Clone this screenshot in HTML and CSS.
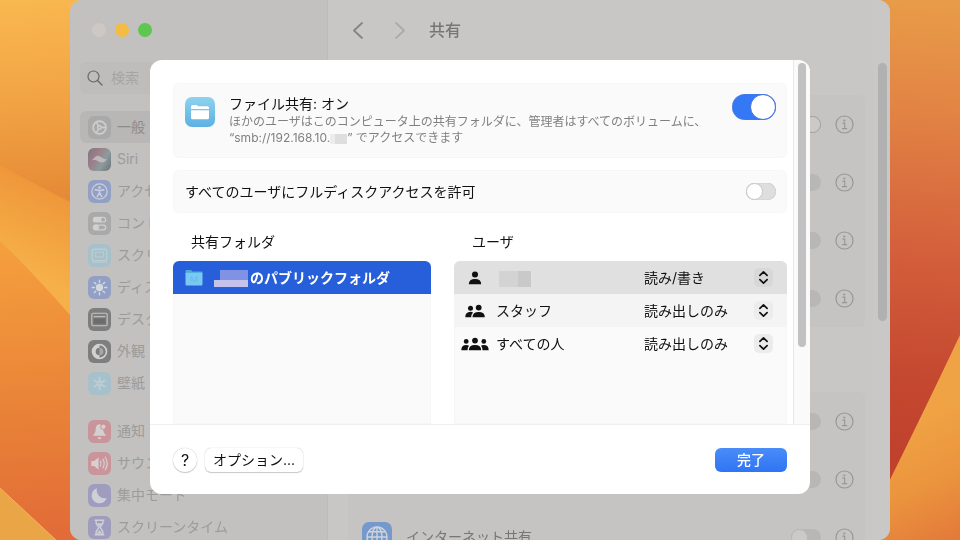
FILE: index.html
```html
<!DOCTYPE html>
<html lang="ja">
	<head>
		<meta charset="utf-8">
		<meta name="viewport" content="width=device-width, initial-scale=1.0">
		<title>共有</title>
		<link rel="stylesheet" href="styles.css">
	</head>

	<body>
		<svg class="wallpaper" viewBox="0 0 960 540" preserveAspectRatio="none" aria-hidden="true">
			<defs>
				<linearGradient id="leftTop" gradientUnits="userSpaceOnUse" x1="0" y1="0" x2="20" y2="200"><stop offset="0" stop-color="#f9b850"/><stop offset="0.5" stop-color="#f2a444"/><stop offset="1" stop-color="#e58a37"/></linearGradient>
				<linearGradient id="leftBand" gradientUnits="userSpaceOnUse" x1="60" y1="190" x2="20" y2="270"><stop offset="0" stop-color="#ee963a"/><stop offset="0.6" stop-color="#f3a642"/><stop offset="1" stop-color="#f6b04a"/></linearGradient>
				<linearGradient id="leftLow" gradientUnits="userSpaceOnUse" x1="0" y1="240" x2="20" y2="540"><stop offset="0" stop-color="#f5a03e"/><stop offset="0.5" stop-color="#ea8638"/><stop offset="1" stop-color="#e26b37"/></linearGradient>
				<linearGradient id="rightTop" gradientUnits="userSpaceOnUse" x1="930" y1="0" x2="900" y2="450"><stop offset="0" stop-color="#e89c48"/><stop offset="0.25" stop-color="#e28344"/><stop offset="0.55" stop-color="#d4603c"/><stop offset="0.85" stop-color="#c4472f"/><stop offset="1" stop-color="#c0422d"/></linearGradient>
				<linearGradient id="rightLow" gradientUnits="userSpaceOnUse" x1="910" y1="420" x2="965" y2="540"><stop offset="0" stop-color="#f0a344"/><stop offset="0.5" stop-color="#eb943e"/><stop offset="1" stop-color="#e27839"/></linearGradient>
			</defs>
			<rect width="480" height="230" fill="url(#leftTop)"/>
			<path d="M0 165Q34 184 90 212V345H0z" fill="url(#leftBand)"/>
			<path d="M0 241Q36 275 90 338V540H0z" fill="url(#leftLow)"/>
			<path d="M0 488L56 540H0z" fill="#eaa547"/>
			<path d="M0 488L56 540" stroke="#f3b45a" stroke-width="1"/>
			<rect x="480" width="480" height="540" fill="url(#rightTop)"/>
			<path d="M960 335Q920 420 860 540H960z" fill="url(#rightLow)"/>
		</svg>

		<!-- icon set -->
		<svg class="defs" aria-hidden="true">
			<symbol id="info" viewBox="0 0 20 20"><circle cx="10" cy="10" r="9" fill="none" stroke="currentColor" stroke-width="1.2"/><circle cx="9.8" cy="5.8" r="1.1" fill="currentColor"/><path d="M7.8 8.6H10.2V14.2M7.4 14.3H12.8" fill="none" stroke="currentColor" stroke-width="1.2"/></symbol>
			<symbol id="updown" viewBox="0 0 20 20"><path d="M6.2 7.8L10 4.2L13.8 7.8M6.2 12.2L10 15.8L13.8 12.2" fill="none" stroke="#111" stroke-width="1.8" stroke-linecap="round" stroke-linejoin="round"/></symbol>
			<symbol id="globe" viewBox="0 0 24 24"><g fill="none" stroke="#d0d3d8" stroke-width="1.1"><circle cx="12" cy="12" r="8"/><ellipse cx="12" cy="12" rx="4" ry="8"/><path d="M12 4V20M4 12H20M5.5 7.8H18.5M5.5 16.2H18.5"/></g></symbol>
		</svg>

		<div class="window">
			<aside class="sidebar">
				<div class="lights">
					<button class="light" aria-label="閉じる"></button>
					<button class="light yellow" aria-label="しまう"></button>
					<button class="light green" aria-label="拡大"></button>
				</div>
				<label class="search">
					<svg viewBox="0 0 16 16" width="16" height="16"><circle cx="6.5" cy="6.5" r="5.5" fill="none" stroke="#666" stroke-width="1.2"/><path d="M10.5 10.5L15 15" stroke="#666" stroke-width="1.3" stroke-linecap="round"/></svg>
					<input type="search" placeholder="検索" aria-label="検索">
				</label>
				<nav>
					<a href="#" class="item current"><span class="tile gray"><svg viewBox="0 0 24 24"><g fill="none" stroke="#cfcfcf" stroke-width="1.5"><circle cx="12" cy="12" r="6.5"/><circle cx="12" cy="12" r="1.8"/><path d="M13.8 12H18.5M11 10.5L8.7 6.5M11 13.5L8.7 17.5"/></g><circle cx="12" cy="12" r="7.5" fill="none" stroke="#cfcfcf" stroke-width="1" stroke-dasharray="1 1.2"/></svg></span>一般</a>
					<a href="#" class="item"><span class="tile siri"><svg viewBox="0 0 24 24"><path d="M4 13Q9 6 13 9T20 12Q15 17 11 14T4 13z" fill="#d3c9cd" opacity="0.7"/></svg></span>Siri</a>
					<a href="#" class="item"><span class="tile blue"><svg viewBox="0 0 24 24"><circle cx="12" cy="12" r="8" fill="none" stroke="#ccd0dc" stroke-width="1.3"/><circle cx="12" cy="7.8" r="1.4" fill="#ccd0dc"/><path d="M7.5 10.2L12 11L16.5 10.2M12 11V13.2L9.7 17.3M12 13.2L14.3 17.3" fill="none" stroke="#ccd0dc" stroke-width="1.5" stroke-linecap="round"/></svg></span>アクセシビリティ</a>
					<a href="#" class="item"><span class="tile gray"><svg viewBox="0 0 24 24"><rect x="5" y="5" width="14" height="6" rx="3" fill="#d0d0d0"/><circle cx="15.8" cy="8" r="2" fill="#a9a8a8"/><rect x="5.6" y="13.6" width="12.8" height="5" rx="2.5" fill="none" stroke="#d0d0d0" stroke-width="1.3"/><circle cx="8.5" cy="16" r="3" fill="#d0d0d0"/></svg></span>コントロールセンター</a>
					<a href="#" class="item"><span class="tile cyan"><svg viewBox="0 0 24 24"><rect x="4.5" y="5.5" width="15" height="12" rx="1.5" fill="none" stroke="#bccdd2" stroke-width="1.5"/><rect x="8" y="8.5" width="8" height="5" fill="none" stroke="#bccdd2"/><path d="M4 19H20" stroke="#bccdd2"/></svg></span>スクリーンセーバ</a>
					<a href="#" class="item"><span class="tile blue"><svg viewBox="0 0 24 24"><circle cx="12" cy="12" r="3.8" fill="#d6d8df"/><path d="M12 4.5V6.5M12 17.5V19.5M4.5 12H6.5M17.5 12H19.5M6.7 6.7L8.1 8.1M15.9 15.9L17.3 17.3M6.7 17.3L8.1 15.9M15.9 8.1L17.3 6.7" stroke="#d6d8df" stroke-width="1.5" stroke-linecap="round"/></svg></span>ディスプレイ</a>
					<a href="#" class="item"><span class="tile dark"><svg viewBox="0 0 24 24"><rect x="4" y="5.5" width="16" height="13" rx="1.5" fill="none" stroke="#c5c5c5" stroke-width="1.2"/><path d="M6 9H18" stroke="#c5c5c5" stroke-width="1.2"/><rect x="6" y="11" width="12" height="5.5" fill="#6c6c6c"/></svg></span>デスクトップと Dock</a>
					<a href="#" class="item"><span class="tile dark"><svg viewBox="0 0 24 24"><circle cx="12" cy="12" r="7.3" fill="none" stroke="#d2d2d2" stroke-width="1.7"/><path d="M12 5A7 7 0 0 0 12 19V16A4 4 0 0 1 12 8z" fill="#d2d2d2"/><path d="M12 8A4 4 0 0 1 12 16z" fill="#d2d2d2" opacity="0.5"/></svg></span>外観</a>
					<a href="#" class="item"><span class="tile cyan"><svg viewBox="0 0 24 24"><g fill="none" stroke="#bfd0d5" stroke-width="1.6"><circle cx="12" cy="12" r="2"/><path d="M12 10V5M12 14V19M10.3 11L6 8.5M13.7 13L18 15.5M10.3 13L6 15.5M13.7 11L18 8.5"/></g></svg></span>壁紙</a>
				</nav>
				<nav>
					<a href="#" class="item"><span class="tile red"><svg viewBox="0 0 24 24"><path d="M12 4.5C8.5 4.5 8 8 8 10.5C8 13 6.8 14 5 16.5H19C17.2 14 16 13 16 10.5C16 8 15.5 4.5 12 4.5z" fill="#d5cfcf"/><path d="M10 18A2 2 0 0 0 14 18z" fill="#d5cfcf"/><circle cx="16" cy="7" r="2.8" fill="#d5cfcf" stroke="#c59096" stroke-width="1"/></svg></span>通知</a>
					<a href="#" class="item"><span class="tile red"><svg viewBox="0 0 24 24"><path d="M3.5 9.5H6.5L11 5.5V18.5L6.5 14.5H3.5z" fill="#d8cfd0"/><path d="M13 9.5Q14.5 12 13 14.5M15.5 7.5Q18.5 12 15.5 16.5M18 5.5Q22 12 18 18.5" fill="none" stroke="#d8cfd0" stroke-width="1.3" stroke-linecap="round"/></svg></span>サウンド</a>
					<a href="#" class="item"><span class="tile purple"><svg viewBox="0 0 24 24"><path d="M9.5 4.5A8 8 0 1 0 19.5 14.5A8 8 0 0 1 9.5 4.5z" fill="#d0cfd8"/></svg></span>集中モード</a>
					<a href="#" class="item"><span class="tile purple"><svg viewBox="0 0 24 24"><path d="M7 4.5H17M7 19.5H17M8.5 5V7.5L11.2 12L8.5 16.5V19M15.5 5V7.5L12.8 12L15.5 16.5V19" fill="none" stroke="#d0cfd8" stroke-width="1.5"/><path d="M9.5 7.5H14.5L12 11.5zM9 18.5L12 14.5L15 18.5z" fill="#d0cfd8"/></svg></span>スクリーンタイム</a>
				</nav>
			</aside>

			<main class="main">
				<header class="topbar">
					<button class="arrow" aria-label="戻る"><svg viewBox="0 0 12 20" width="12" height="20"><path d="M10 3L2 10.5L10 18" fill="none" stroke="#858483" stroke-width="1.8" stroke-linecap="round" stroke-linejoin="round"/></svg></button>
					<button class="arrow" aria-label="進む"><svg viewBox="0 0 12 20" width="12" height="20"><path d="M2 3L10 10.5L2 18" fill="none" stroke="#acabaa" stroke-width="1.8" stroke-linecap="round" stroke-linejoin="round"/></svg></button>
					<h1>共有</h1>
				</header>
				<div class="group">
					<div class="service"><input type="checkbox" class="switch dim lit" aria-label="共有サービス 1"><button class="info" aria-label="情報"><svg><use href="#info"/></svg></button></div>
					<div class="service"><input type="checkbox" class="switch dim" aria-label="共有サービス 2"><button class="info" aria-label="情報"><svg><use href="#info"/></svg></button></div>
					<div class="service"><input type="checkbox" class="switch dim" aria-label="共有サービス 3"><button class="info" aria-label="情報"><svg><use href="#info"/></svg></button></div>
					<div class="service"><input type="checkbox" class="switch dim" aria-label="共有サービス 4"><button class="info" aria-label="情報"><svg><use href="#info"/></svg></button></div>
				</div>
				<div class="group">
					<div class="service"><input type="checkbox" class="switch dim" aria-label="共有サービス 5"><button class="info" aria-label="情報"><svg><use href="#info"/></svg></button></div>
					<div class="service"><input type="checkbox" class="switch dim" aria-label="共有サービス 6"><button class="info" aria-label="情報"><svg><use href="#info"/></svg></button></div>
					<div class="service">
						<span class="badge"><svg viewBox="0 0 24 24"><use href="#globe"/></svg></span>
						<label class="service-name" for="internet">インターネット共有</label>
						<input type="checkbox" class="switch dim" id="internet"><button class="info" aria-label="情報"><svg><use href="#info"/></svg></button>
					</div>
				</div>
			</main>
			<div class="gutter"><div class="thumb"></div></div>

			<section class="sheet" role="dialog" aria-label="ファイル共有">
				<div class="sheet-body">
					<div class="content">
						<div class="card intro">
							<svg class="app-icon" viewBox="0 0 30 30" width="30" height="30">
								<defs><linearGradient id="sky" x1="0" y1="0" x2="0" y2="1"><stop offset="0" stop-color="#8ed3ee"/><stop offset="1" stop-color="#5cb0e2"/></linearGradient></defs>
								<rect width="30" height="30" rx="7" fill="url(#sky)"/>
								<path d="M6 12V9.5Q6 8 7.5 8H11.5L13.2 9.3H22.5Q24 9.3 24 10.8V12z" fill="#fff"/>
								<path d="M6 13.2H24V20.8Q24 22.3 22.5 22.3H7.5Q6 22.3 6 20.8z" fill="#fff"/>
							</svg>
							<div class="intro-text">
								<label class="intro-title" for="sharing">ファイル共有: オン</label>
								<p>ほかのユーザはこのコンピュータ上の共有フォルダに、管理者はすべてのボリュームに、<br>“smb://192.168.10.<span class="mask mask-ip"></span>” でアクセスできます</p>
							</div>
							<input type="checkbox" class="switch big" id="sharing" checked>
						</div>
						<div class="card access">
							<label for="full">すべてのユーザにフルディスクアクセスを許可</label>
							<input type="checkbox" class="switch" id="full">
						</div>

						<div class="columns">
							<div class="column">
								<h2>共有フォルダ</h2>
								<ul class="list">
									<li class="folder">
										<svg viewBox="0 0 18 17" width="18" height="17"><path d="M0.5 3V2Q0.5 1 1.5 1H6L7.5 2.5H16.5Q17.5 2.5 17.5 3.5V5H0.5z" fill="#4da9d8"/><rect x="0.5" y="3.8" width="17" height="12.7" rx="1" fill="#79c9f2"/><path d="M6.5 7.5L9 13L11.5 7.5M6.5 12.5Q4.5 10 6.5 7.5M11.5 12.5Q13.5 10 11.5 7.5" fill="none" stroke="#62b6e4" stroke-width="0.8"/></svg>
										<span><span class="mask mask-owner"></span>のパブリックフォルダ</span>
									</li>
								</ul>
							</div>
							<div class="column">
								<h2 id="users">ユーザ</h2>
								<div class="list">
									<table aria-labelledby="users">
										<tr class="picked">
											<td class="who"><svg viewBox="0 0 14 14" width="14" height="14"><circle cx="7" cy="3.6" r="3"/><path d="M0.8 13.2Q0.8 8 7 8T13.2 13.2z"/></svg></td>
											<td><span class="mask mask-user"></span></td>
											<td class="right"><span class="popup"><select aria-label="アクセス権"><option>読み/書き</option></select><svg><use href="#updown"/></svg></span></td>
										</tr>
										<tr class="striped">
											<td class="who"><svg viewBox="0 0 20 14" width="20" height="14"><circle cx="5.5" cy="4.2" r="2.5"/><path d="M0.3 13.2Q0.3 8 5.5 7.8Q7 7.8 8 8.5Q6.2 10.5 6.2 13.2z"/><circle cx="13.7" cy="3.6" r="2.9"/><path d="M7.5 13.2Q7.5 8 13.7 8T19.8 13.2z"/></svg></td>
											<td>スタッフ</td>
											<td class="right"><span class="popup"><select aria-label="アクセス権"><option>読み出しのみ</option></select><svg><use href="#updown"/></svg></span></td>
										</tr>
										<tr>
											<td class="who"><svg viewBox="0 0 28 14" width="28" height="14"><circle cx="5.2" cy="4.4" r="2.4"/><path d="M0.3 13.2Q0.3 8 5.2 8Q7 8 8 8.8Q6.5 10.5 6.5 13.2z"/><circle cx="22.8" cy="4.4" r="2.4"/><path d="M27.7 13.2Q27.7 8 22.8 8Q21 8 20 8.8Q21.5 10.5 21.5 13.2z"/><circle cx="14" cy="3.6" r="2.9"/><path d="M7.8 13.2Q7.8 8 14 8T20.2 13.2z"/></svg></td>
											<td>すべての人</td>
											<td class="right"><span class="popup"><select aria-label="アクセス権"><option>読み出しのみ</option></select><svg><use href="#updown"/></svg></span></td>
										</tr>
									</table>
								</div>
							</div>
						</div>
					</div>
					<div class="track"><div class="thumb"></div></div>
				</div>
				<footer class="actions">
					<button class="btn help" aria-label="ヘルプ">?</button>
					<button class="btn">オプション...</button>
					<button class="btn primary">完了</button>
				</footer>
			</section>
		</div>
	</body>
</html>
```

FILE: styles.css
```css
* {
	box-sizing: border-box;
}

body {
	margin: 0;
	overflow: hidden;
	font-family: Inter, "Noto Sans CJK JP", sans-serif;
	font-size: 14px;
	line-height: 20px;
	color: #111;
	background-color: #e88b37;
}

h1, h2, p, ul {
	margin: 0;
	padding: 0;
}

button, input, select {
	font: inherit;
	color: inherit;
	margin: 0;
	padding: 0;
	border: none;
	background: none;
}

.defs {
	position: absolute;
	width: 0;
	height: 0;
}

.wallpaper {
	position: fixed;
	width: 100%;
	height: 100%;
}

/* settings window, dimmed behind the sheet */
.window {
	position: relative;
	display: flex;
	height: 100vh;
	margin: 0 70px;
	border-radius: 12px;
	overflow: hidden;
	background: #c8c7c5;
}

.sidebar {
	flex: none;
	width: 258px;
	padding: 0 10px;
	background: #c2c1c0;
	border-right: 1px solid #bdbcbb;
}

.lights {
	display: flex;
	align-items: center;
	gap: 9px;
	height: 60px;
	padding-left: 12px;
}

.light {
	width: 14px;
	height: 14px;
	border-radius: 50%;
	background: #cdc8c4;
}

.yellow {
	background: #f3bc42;
}

.green {
	background: #5dc74f;
}

.search {
	display: flex;
	align-items: center;
	gap: 8px;
	height: 32px;
	margin: 2px 0 17px;
	padding: 0 7px;
	border-radius: 6px;
	background: #bebdbc;
}

.search input {
	flex: 1;
	min-width: 0;
}

.search input::placeholder {
	color: #a6a5a4;
	opacity: 1;
}

nav {
	margin-bottom: 16px;
}

.item {
	display: flex;
	align-items: center;
	gap: 6px;
	height: 32px;
	padding-left: 8px;
	border-radius: 6px;
	color: #9c9b9a;
	text-decoration: none;
	white-space: nowrap;
}

.current {
	color: #8c8b8a;
	background: #b8b7b6;
}

.tile {
	flex: none;
	width: 23px;
	height: 23px;
	border-radius: 6px;
}

.tile svg, .badge svg {
	display: block;
	width: 100%;
	height: 100%;
}

.gray { background: #aaa9a9; }
.blue { background: #92a0c6; }
.cyan { background: #a7c1cc; }
.dark { background: #7e7e7e; }
.red { background: #c9949a; }
.purple { background: #9f9dbe; }

.siri {
	background: linear-gradient(120deg, #7d7680 0, #9c7f8a 35%, #8b9c9d 65%, #6f6f78 100%);
}

.main {
	flex: 1;
	padding: 0 8px 0 20px;
}

.topbar {
	display: flex;
	align-items: center;
	gap: 30px;
	height: 60px;
	margin-bottom: 35px;
	padding-left: 4px;
}

.topbar h1 {
	margin-left: -7px;
	font-size: 16px;
	font-weight: 500;
	color: #777675;
}

.arrow {
	display: flex;
}

.group {
	margin-bottom: 65px;
	border-radius: 6px;
	background: #c5c4c2;
}

.service {
	display: flex;
	align-items: center;
	justify-content: flex-end;
	gap: 14px;
	height: 58px;
	padding: 0 11px 0 14px;
}

.badge {
	width: 30px;
	height: 30px;
	border-radius: 7px;
	background: #7598cd;
}

.service-name {
	flex: 1;
	color: #777675;
}

.info {
	display: flex;
	color: #979694;
}

.info svg {
	width: 19px;
	height: 19px;
}

.gutter {
	width: 17px;
	padding: 63px 3px 0 5px;
	background: #c9c8c7;
}

.thumb {
	border-radius: 5px;
	background: #c1c1c1;
}

.gutter .thumb {
	height: 258px;
	background: #b2b1b1;
}

/* switches */
.switch {
	flex: none;
	appearance: none;
	display: flex;
	width: 30px;
	height: 17px;
	border-radius: 13px;
	background: #dedede;
	box-shadow: inset 0 0 1px #999;
}

.switch::before {
	content: "";
	box-sizing: border-box;
	height: 100%;
	aspect-ratio: 1;
	border: 1px solid #c8c8c8;
	border-radius: 50%;
	background: #fff;
}

.switch:checked {
	justify-content: flex-end;
	background: #3478f6;
}

.switch:checked::before {
	border-color: #3f6fd8;
}

.big {
	width: 44px;
	height: 26px;
}

.dim {
	background: #b8b7b6;
	box-shadow: none;
}

.dim::before {
	border-color: #b8b7b6;
	background: #cbcac9;
}

.lit {
	justify-content: flex-end;
}

.lit::before {
	border-color: #a2a1a0;
}

/* file sharing sheet */
.sheet {
	position: absolute;
	inset: 60px 80px 46px;
	display: flex;
	flex-direction: column;
	border-radius: 12px;
	overflow: hidden;
	background: #fff;
}

.sheet-body {
	flex: 1;
	display: flex;
	min-height: 0;
}

.content {
	flex: 1;
	display: flex;
	flex-direction: column;
	padding: 23px 6px 0 23px;
}

.card {
	display: flex;
	margin-bottom: 12px;
	padding: 11px 11px 11px 12px;
	border-radius: 6px;
	background: #fafafa;
	box-shadow: inset 0 0 0 1px #f6f6f6;
}

.intro {
	gap: 14px;
}

.app-icon {
	flex: none;
	margin-top: 3px;
}

.intro-text {
	flex: 1;
}

.intro-title {
	display: block;
	line-height: 20px;
}

.intro-text p {
	padding-bottom: 1px;
	font-size: 12px;
	line-height: 16px;
	color: #808080;
}

.access {
	align-items: center;
	justify-content: space-between;
	height: 43px;
	margin: 0;
}

.columns {
	flex: 1;
	display: grid;
	grid-template-columns: 258fr 333fr;
	gap: 23px;
}

.column {
	display: flex;
	flex-direction: column;
}

.column h2 {
	padding: 19px 18px 9px;
	font-size: 14px;
	font-weight: 400;
}

.list {
	flex: 1;
	border-radius: 6px 6px 0 0;
	overflow: hidden;
	list-style: none;
	background: #fafafa;
	box-shadow: inset 0 0 0 1px #f6f6f6;
}

.folder {
	display: flex;
	align-items: center;
	gap: 11px;
	height: 33px;
	padding-left: 12px;
	font-weight: 700;
	color: #fff;
	background: #265fd9;
}

/* blurred out names */
.mask {
	display: inline-block;
	vertical-align: middle;
}

.mask-ip {
	width: 17px;
	height: 10px;
	background: linear-gradient(90deg, #ececec 30%, #dedede 30%);
}

.mask-owner {
	width: 34px;
	height: 17px;
	margin-right: 2px;
	background:
		linear-gradient(#265fd9, #265fd9) 0 0 / 6px 10px no-repeat,
		linear-gradient(#7f92e3 60%, #c5c3ee 60%);
}

.mask-user {
	width: 32px;
	height: 16px;
	margin-left: 3px;
	background: linear-gradient(90deg, #d3d3d3 60%, #c9c9c9 60%);
}

table {
	width: 100%;
	border-collapse: collapse;
}

tr {
	height: 33px;
}

td {
	padding: 0;
}

td svg {
	display: block;
}

.who {
	width: 42px;
}

.who svg {
	margin: 0 auto;
	fill: #111;
}

.right {
	width: 143px;
	padding-right: 14px;
}

.picked {
	background: #e0e0e0;
}

.striped {
	background: #f4f4f4;
}

.popup {
	display: grid;
	align-items: center;
}

.popup select {
	grid-area: 1 / 1;
	appearance: none;
	width: 100%;
	height: 20px;
}

.popup svg {
	grid-area: 1 / 1;
	justify-self: end;
	width: 19px;
	height: 19px;
	border-radius: 5px;
	background: #ececec;
	pointer-events: none;
}

.picked .popup svg {
	background: #d8d8d8;
}

.track {
	width: 17px;
	padding: 3px 4px 0;
	border-left: 1px solid #e8e8e8;
	background: #fafafa;
}

.track .thumb {
	height: 284px;
}

.actions {
	display: flex;
	align-items: center;
	gap: 8px;
	height: 70px;
	padding: 0 23px;
	border-top: 1px solid #f0f0f0;
}

.btn {
	height: 24px;
	padding: 0 8px;
	border-radius: 6px;
	background: #fff;
	box-shadow: 0 0 1px #aaa, 0 1px 1px #ccc;
}

.help {
	width: 24px;
	padding: 0;
	border-radius: 50%;
	font-size: 16px;
}

.primary {
	margin-left: auto;
	padding: 0 22px;
	font-weight: 500;
	color: #fff;
	background: linear-gradient(#4a8cf8, #2f74f4);
	box-shadow: none;
}
```
